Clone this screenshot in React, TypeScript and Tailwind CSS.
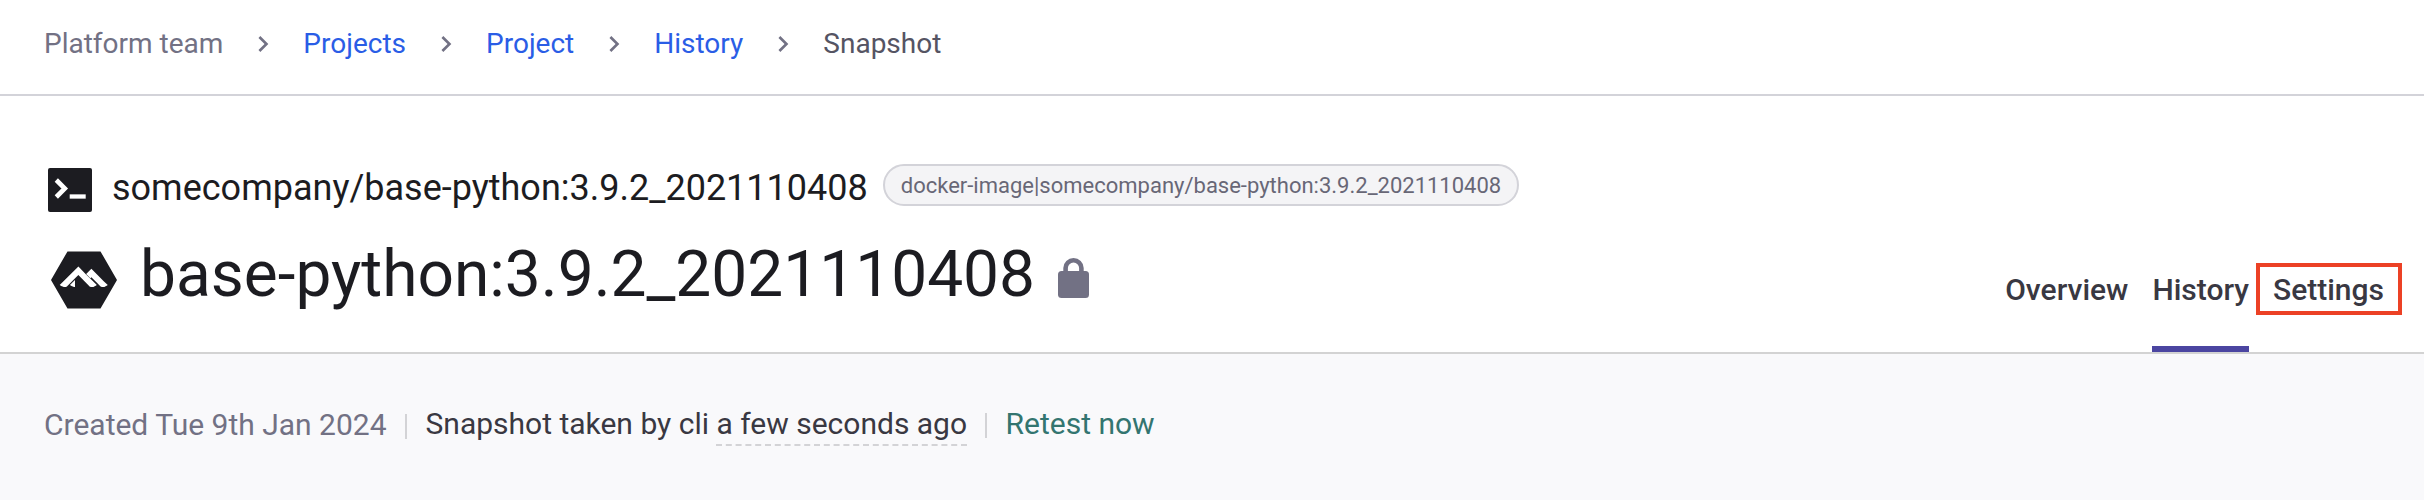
import { Fragment } from 'react';
import { SiAlpinelinux } from 'react-icons/si';

const crumbs = [
  { label: 'Platform team', tone: 'text-[#727184]' },
  { label: 'Projects', tone: 'text-[#2a5de6]', href: '#projects' },
  { label: 'Project', tone: 'text-[#2a5de6]', href: '#project' },
  { label: 'History', tone: 'text-[#2a5de6]', href: '#history' },
  { label: 'Snapshot', tone: 'text-[#555463]' },
];

function Chevron() {
  return (
    <svg viewBox="0 0 24 24" className="mx-6 mt-px size-8 shrink-0 fill-[#727184]">
      <path d="M10 6 8.59 7.41 13.17 12l-4.58 4.59L10 18l6-6z" />
    </svg>
  );
}

function Breadcrumbs() {
  return (
    <nav className="flex h-24 items-center border-b-2 border-[#d3d3d9] pb-[7px] pl-11 text-[28px] leading-[33px]">
      {crumbs.map((c, i) => (
        <Fragment key={c.label}>
          {i > 0 && <Chevron />}
          {c.href ? (
            <a href={c.href} className={c.tone}>{c.label}</a>
          ) : (
            <span className={c.tone}>{c.label}</span>
          )}
        </Fragment>
      ))}
    </nav>
  );
}

function TerminalIcon() {
  return (
    <svg viewBox="0 0 44 44" className="mt-1 size-11 shrink-0">
      <rect width="44" height="44" rx="2" fill="#1c1c21" />
      <path d="M8.3 12l8.5 8.5-8.5 8.5" fill="none" stroke="#fff" strokeWidth="4.6" />
      <path d="M21.7 28.5h16" stroke="#fff" strokeWidth="4.3" />
    </svg>
  );
}

function LockIcon() {
  return (
    <svg viewBox="0 0 31 40" className="mt-[21px] ml-[23px] h-10 w-[31px] shrink-0">
      <rect y="13" width="31" height="27" rx="3.5" fill="#727184" />
      <path d="M7.6 15V10a7.9 7.7 0 0 1 15.8 0v5" fill="none" stroke="#727184" strokeWidth="4.6" />
    </svg>
  );
}

function Tabs() {
  return (
    <div className="flex gap-6 pr-10 text-[30px] leading-[35px] font-medium text-[#393842]">
      <a href="#overview" className="h-20">Overview</a>
      <a href="#history" className="h-20 border-b-6 border-[#4b45a1]">History</a>
      <a href="#settings" className="relative h-20">
        Settings
        <span className="absolute -top-[9px] -left-[17px] h-[52px] w-[146px] border-4 border-[#ec4125]" />
      </a>
    </div>
  );
}

function Header() {
  return (
    <header className="flex h-[258px] items-end justify-between border-b-2 border-[#d3d3d3]">
      <div className="flex h-full flex-col pt-[68px] text-[#1c1c21]">
        <div className="flex h-11 items-start pl-12">
          <TerminalIcon />
          <div className="mt-0.5 ml-5 text-4xl leading-[44px]">somecompany/base-python:3.9.2_2021110408</div>
          <div className="ml-[15px] h-[42px] rounded-full border-2 border-[#d3d3d9] bg-[#f4f4f6] px-4 text-[22px] leading-[39px] text-[#686776]">
            docker-image|somecompany/base-python:3.9.2_2021110408
          </div>
        </div>
        <div className="mt-[29px] flex items-start pl-[51px]">
          <SiAlpinelinux className="mt-2.5 size-[66px] shrink-0" />
          <h1 className="ml-[23px] text-[64px] leading-[75px]">base-python:3.9.2_2021110408</h1>
          <LockIcon />
        </div>
      </div>
      <Tabs />
    </header>
  );
}

function Meta() {
  return (
    <section className="flex h-[146px] items-start bg-[#f9f9fb] pt-[52px] pl-11 text-[30px] leading-[35px] text-[#393842]">
      <span className="mt-px text-[#727184]">Created Tue 9th Jan 2024</span>
      <span className="mt-2 ml-[18px] h-[25px] w-0.5 bg-[#d3d3d6]" />
      <span className="ml-[19px]">
        Snapshot taken by cli{' '}
        <span className="border-b-2 border-dashed border-[#d3d3d6] pb-[3px]">a few seconds ago</span>
      </span>
      <span className="mt-[7px] ml-[18px] h-[25px] w-0.5 bg-[#d3d3d6]" />
      <a href="#retest" className="ml-[18.5px] text-[#337570]">Retest now</a>
    </section>
  );
}

export default function App() {
  return (
    <div className="h-[500px] w-full overflow-hidden bg-white font-['Roboto',sans-serif]">
      <Breadcrumbs />
      <Header />
      <Meta />
    </div>
  );
}
